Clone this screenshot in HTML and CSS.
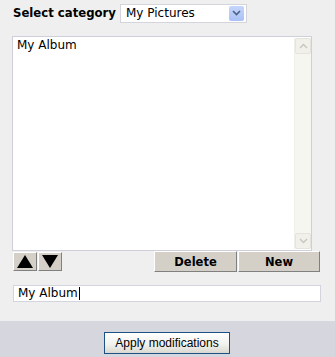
FILE: index.html
```html
<!DOCTYPE html>
<html>
<head>
<meta charset="utf-8">
<link rel="stylesheet" href="styles.css">
</head>
<body>
<div class="main">
  <div class="cat-row">
    <span class="cat-label">Select category</span>
    <div class="select">
      <span class="select-text">My Pictures</span>
      <span class="select-btn">
        <svg width="9" height="6" viewBox="0 0 9 6"><path d="M1 1 L4.5 4.5 L8 1" fill="none" stroke="#4d6185" stroke-width="1.6"/></svg>
      </span>
    </div>
  </div>
  <div class="listbox">
    <div class="list-items">
      <div class="list-item">My Album</div>
    </div>
    <div class="scrollbar">
      <div class="sb-btn">
        <svg width="9" height="6" viewBox="0 0 9 6"><path d="M1 5 L4.5 1.5 L8 5" fill="none" stroke="#c9c8bc" stroke-width="1.5"/></svg>
      </div>
      <div class="sb-track"></div>
      <div class="sb-btn">
        <svg width="9" height="6" viewBox="0 0 9 6"><path d="M1 1 L4.5 4.5 L8 1" fill="none" stroke="#c9c8bc" stroke-width="1.5"/></svg>
      </div>
    </div>
  </div>
  <div class="btn-row">
    <div class="arrows">
      <button class="arrow-btn"><svg width="16" height="13" viewBox="0 0 16 13"><path d="M8 0 L16 13 L0 13 Z" fill="#000"/></svg></button>
      <button class="arrow-btn"><svg width="16" height="13" viewBox="0 0 16 13"><path d="M0 0 L16 0 L8 13 Z" fill="#000"/></svg></button>
    </div>
    <div class="actions">
      <button class="act-btn delete">Delete</button>
      <button class="act-btn new">New</button>
    </div>
  </div>
  <div class="name-input">My Album<span class="caret"></span></div>
</div>
<div class="footer">
  <button class="apply">Apply modifications</button>
</div>
</body>
</html>
```
FILE: styles.css
```css
html, body {
  margin: 0;
  padding: 0;
}
body {
  width: 335px;
  height: 357px;
  background: #efefef;
  font-family: "DejaVu Sans", Verdana, sans-serif;
  font-size: 12px;
  color: #000;
  overflow: hidden;
}
.main {
  padding: 4px 14px 0 12px;
  height: 321px;
  box-sizing: border-box;
}
.cat-row {
  display: flex;
  align-items: center;
  height: 18px;
}
.cat-label {
  font-weight: bold;
  font-size: 11.7px;
  margin-left: 1px;
  width: 107px;
  white-space: nowrap;
}
.select {
  width: 125px;
  height: 17px;
  border: 1px solid #d4d4dc;
  background: #fff;
  display: flex;
  align-items: center;
  justify-content: space-between;
  box-sizing: content-box;
}
.select-text {
  padding-left: 5px;
  font-size: 12px;
}
.select-btn {
  width: 15px;
  height: 15px;
  margin-right: 2px;
  background: linear-gradient(#c6d6fb, #a8c1f5);
  border-radius: 2px;
  display: flex;
  align-items: center;
  justify-content: center;
}
.listbox {
  margin-top: 14px;
  margin-right: 9px;
  height: 213px;
  border: 1px solid #cfcfdb;
  background: #fff;
  display: flex;
}
.list-items {
  flex: 1;
  padding: 1px 2px;
}
.list-item {
  font-size: 12px;
  line-height: 15px;
  padding-left: 2px;
}
.scrollbar {
  width: 16px;
  margin: 1px 0 1px 0;
  background: #f5f5f0;
  border-left: 1px solid #f0f0e8;
  display: flex;
  flex-direction: column;
}
.sb-btn {
  height: 16px;
  background: #f1f0ea;
  border: 1px solid #e5e4dc;
  border-radius: 2px;
  box-sizing: border-box;
  display: flex;
  align-items: center;
  justify-content: center;
}
.sb-track {
  flex: 1;
  background: #f6f6f0;
}
.btn-row {
  display: flex;
  justify-content: space-between;
  margin-top: 0;
  margin-left: 1px;
  margin-right: 1px;
  height: 21px;
}
.arrows {
  display: flex;
  gap: 1px;
  padding-top: 1px;
}
.arrow-btn {
  width: 24px;
  height: 19px;
  padding: 0;
  background: #d4d0c8;
  border: 1px solid;
  border-color: #fff #808080 #808080 #fff;
  display: flex;
  align-items: flex-end;
  justify-content: center;
  padding-bottom: 2px;
}
.actions {
  display: flex;
  gap: 1px;
}
.act-btn {
  height: 21px;
  padding: 0;
  background: #d4d0c8;
  border: 1px solid;
  border-color: #fff #808080 #808080 #fff;
  font-family: "DejaVu Sans", Verdana, sans-serif;
  font-weight: bold;
  font-size: 11.5px;
  color: #000;
}
.delete { width: 83px; }
.new { width: 82px; }
.name-input {
  margin-top: 13px;
  margin-left: 1px;
  height: 17px;
  border: 1px solid #d4d4de;
  background: #fff;
  box-sizing: border-box;
  font-size: 12px;
  line-height: 15px;
  padding-left: 4px;
  display: flex;
  align-items: center;
}
.caret {
  display: inline-block;
  width: 1px;
  height: 13px;
  background: #000;
  margin-left: 1px;
}
.footer {
  height: 36px;
  background: #d6d6de;
  display: flex;
  justify-content: center;
  align-items: flex-start;
  padding-top: 11px;
  box-sizing: border-box;
}
.apply {
  width: 126px;
  height: 22px;
  margin-left: -1px;
  border: 1px solid #1d5185;
  background: linear-gradient(#ffffff, #f0f0ec 60%, #d9d8d0);
  font-family: "Liberation Sans", Arial, sans-serif;
  font-size: 12px;
  color: #000;
  padding: 0;
}
```
